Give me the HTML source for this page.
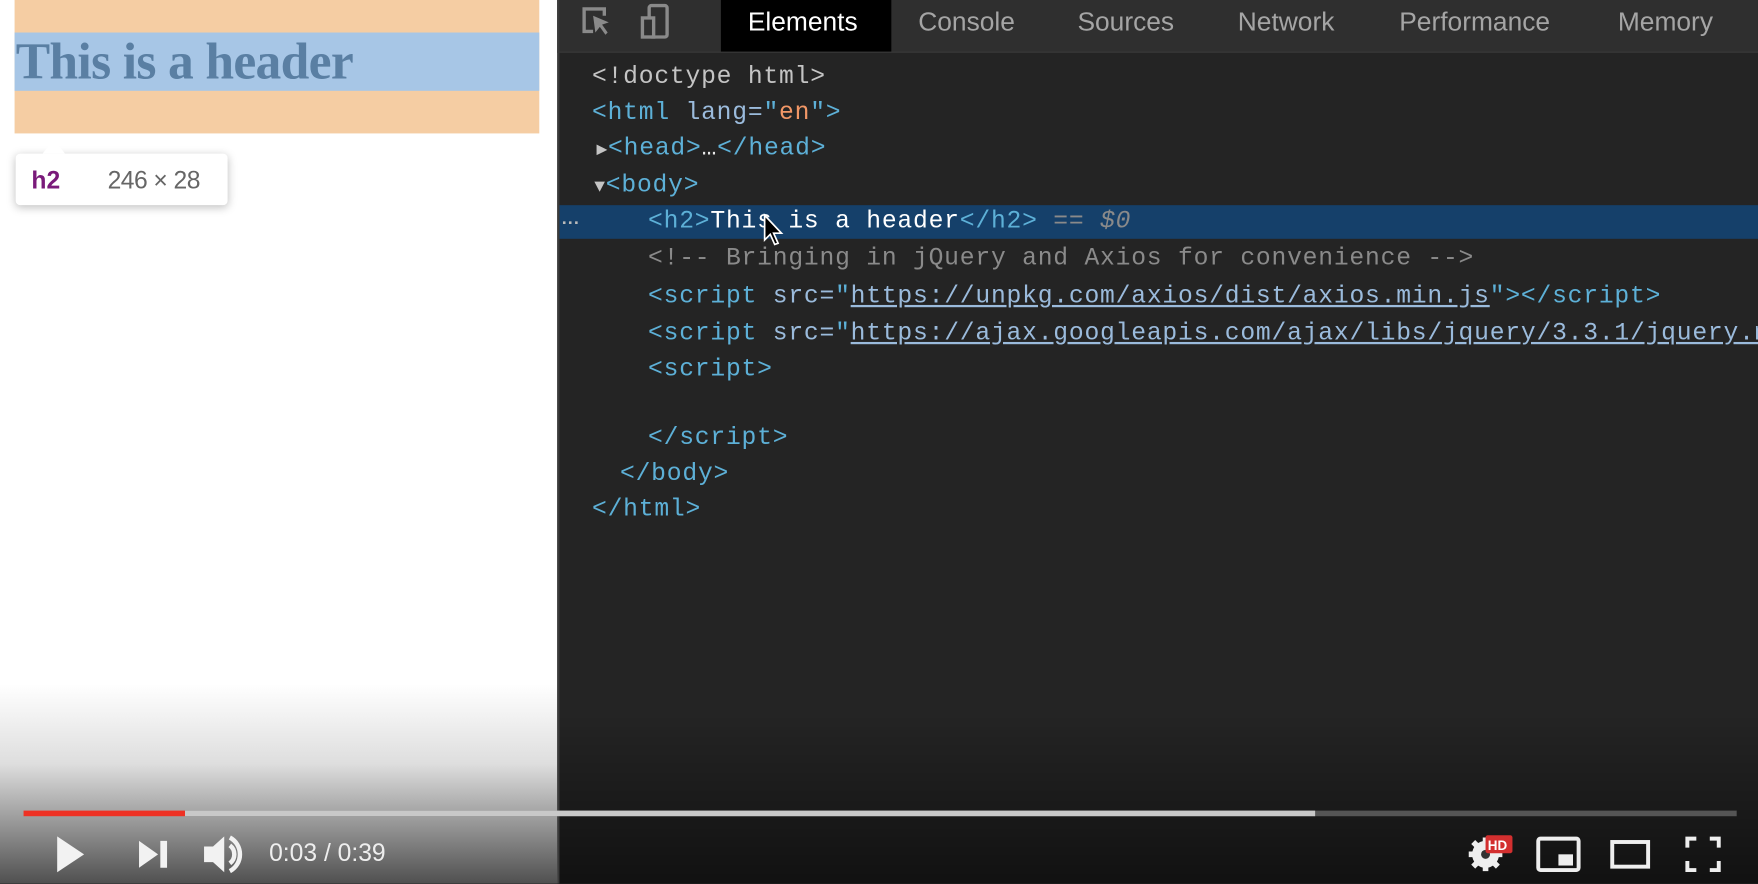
<!DOCTYPE html>
<html><head><style>
html,body{margin:0;padding:0;width:1758px;height:884px;overflow:hidden;background:#242424}
#w{position:absolute;left:0;top:0;width:1568px;height:788px;transform:scale(1.12117);transform-origin:0 0;overflow:hidden}
.a{position:absolute}
.mono{font-family:"Liberation Mono",monospace;font-size:22px;letter-spacing:0.7px;white-space:pre;line-height:24px}
.t{color:#5db0d7}.n{color:#9bbbdc}.v{color:#f29766}.g{color:#c4c4c4}.c{color:#8a8a8a}.w{color:#e8e8e8}
.u{text-decoration:underline;color:#9bbbdc}
.tab{position:absolute;top:0;height:46px;line-height:38px;font-family:"Liberation Sans",sans-serif;font-size:23.5px;color:#a5a5a5}
</style></head><body><div id="w">
<div class="a" style="left:0;top:0;width:497px;height:788px;background:#fff"></div>
<div class="a" style="left:13px;top:0;width:468px;height:119px;background:#f5cda3"></div>
<div class="a" style="left:13px;top:29px;width:468px;height:52px;background:#a7c6e6"></div>
<div class="a" style="left:14px;top:29px;font:bold 46px 'Liberation Serif',serif;color:#5a7fa3;line-height:52px;letter-spacing:-0.6px">This is a header</div>
<div class="a" style="left:14px;top:137px;width:189px;height:46px;background:#fff;border-radius:4px;box-shadow:0 2px 8px rgba(0,0,0,.25)"></div>
<div class="a" style="left:38px;top:124px;width:0;height:0;border-left:10px solid transparent;border-right:10px solid transparent;border-bottom:13px solid #fff"></div>
<div class="a" style="left:28px;top:148px;font:bold 22px 'Liberation Sans',sans-serif;color:#7a1a7a">h2</div>
<div class="a" style="left:96px;top:148px;font:22px 'Liberation Sans',sans-serif;color:#666;letter-spacing:-0.5px">246 × 28</div>

<div class="a" style="left:497px;top:0;width:1071px;height:46px;background:#2f2f2f;border-bottom:1px solid #3a3a3a"></div>
<div class="a" style="left:497px;top:0;width:2px;height:788px;background:#3b3b3b"></div>
<svg class="a" style="left:515px;top:2px" width="110" height="40"><path d="M14 26H6V6h18v6" fill="none" stroke="#8a8a8a" stroke-width="3"/><path d="M14 12l14 6-6 2 5 7-2 2-5-7-4 5z" fill="#8a8a8a"/><rect x="64" y="3" width="16" height="28" rx="2" fill="none" stroke="#8a8a8a" stroke-width="3"/><rect x="58" y="14" width="10" height="17" fill="#2f2f2f" stroke="#8a8a8a" stroke-width="3"/><rect x="111" y="4" width="1" height="30" fill="#444"/></svg>
<div class="a" style="left:643px;top:0;width:152px;height:46px;background:#000"></div>
<div class="tab" style="left:667px;color:#fff">Elements</div>
<div class="tab" style="left:819px">Console</div>
<div class="tab" style="left:961px">Sources</div>
<div class="tab" style="left:1104px">Network</div>
<div class="tab" style="left:1248px">Performance</div>
<div class="tab" style="left:1443px">Memory</div>

<div class="a" style="left:499px;top:183px;width:1069px;height:30px;background:#15406a"></div>
<div class="a" style="left:501px;top:187px;color:#bbb;font:bold 16px 'Liberation Sans';letter-spacing:1px">...</div>
<div class="a mono" style="left:528px;top:57px"><span class="g">&lt;!doctype html&gt;</span></div>
<div class="a mono" style="left:528px;top:89px"><span class="t">&lt;html </span><span class="n">lang=</span><span class="t">"</span><span class="v">en</span><span class="t">"&gt;</span></div>
<div class="a mono" style="left:532px;top:121px"><span class="g" style="font-size:16px">▶</span><span class="t">&lt;head&gt;</span><span class="w">…</span><span class="t">&lt;/head&gt;</span></div>
<div class="a mono" style="left:530px;top:154px"><span class="g" style="font-size:16px">▼</span><span class="t">&lt;body&gt;</span></div>
<div class="a mono" style="left:578px;top:186px"><span class="t">&lt;h2&gt;</span><span style="color:#fff">This is a header</span><span class="t">&lt;/h2&gt;</span><span class="c"> == <i>$0</i></span></div>
<div class="a mono" style="left:578px;top:219px"><span class="c">&lt;!-- Bringing in jQuery and Axios for convenience --&gt;</span></div>
<div class="a mono" style="left:578px;top:253px"><span class="t">&lt;script </span><span class="n">src=</span><span class="t">"</span><span class="u">https://unpkg.com/axios/dist/axios.min.js</span><span class="t">"&gt;&lt;/script&gt;</span></div>
<div class="a mono" style="left:578px;top:286px"><span class="t">&lt;script </span><span class="n">src=</span><span class="t">"</span><span class="u">https://ajax.googleapis.com/ajax/libs/jquery/3.3.1/jquery.min.js</span></div>
<div class="a mono" style="left:578px;top:318px"><span class="t">&lt;script&gt;</span></div>
<div class="a mono" style="left:578px;top:379px"><span class="t">&lt;/script&gt;</span></div>
<div class="a mono" style="left:553px;top:411px"><span class="t">&lt;/body&gt;</span></div>
<div class="a mono" style="left:528px;top:443px"><span class="t">&lt;/html&gt;</span></div>
<svg class="a" style="left:680px;top:190px" width="20" height="32"><path d="M2 2v22l5-5 4 9 3-1-4-9h7z" fill="#000" stroke="#fff" stroke-width="1.5"/></svg>

<div class="a" style="left:0;top:610px;width:497px;height:178px;background:linear-gradient(rgba(90,90,90,0),rgba(90,90,90,.2) 40%,rgba(80,80,80,1))"></div>
<div class="a" style="left:499px;top:640px;width:1069px;height:148px;background:linear-gradient(rgba(0,0,0,0),rgba(0,0,0,.5))"></div>
<div class="a" style="left:21px;top:723px;width:1528px;height:5px;background:#555"></div>
<div class="a" style="left:21px;top:723px;width:1152px;height:5px;background:#c8c8c8"></div>
<div class="a" style="left:21px;top:723px;width:144px;height:5px;background:#ee3124"></div>
<svg class="a" style="left:40px;top:740px" width="340" height="44"><path d="M11 6l24 16-24 16z" fill="#f2f2f2"/><path d="M84 10l17 12-17 12z M103 10h6v24h-6z" fill="#f2f2f2"/><path d="M142 15h8l10-9v32l-10-9h-8z" fill="#f2f2f2"/><path d="M165 14a10 10 0 0 1 0 16M165 7a17 17 0 0 1 0 30" fill="none" stroke="#f2f2f2" stroke-width="4"/></svg>
<div class="a" style="left:240px;top:748px;font:22px 'Liberation Sans',sans-serif;color:#eee">0:03 / 0:39</div>
<svg class="a" style="left:1305px;top:742px" width="240" height="40"><circle cx="20" cy="20" r="9" fill="none" stroke="#eee" stroke-width="6"/><path d="M20 5v30M5 20h30M9 9l22 22M31 9L9 31" stroke="#eee" stroke-width="5"/><circle cx="20" cy="20" r="4" fill="#333"/><rect x="20" y="3" width="24" height="16" rx="2" fill="#d32f2f"/><text x="22" y="16" font-family="Liberation Sans" font-weight="bold" font-size="12" fill="#fff">HD</text><rect x="67" y="6" width="36" height="28" rx="2" fill="none" stroke="#eee" stroke-width="3.5"/><rect x="85" y="20" width="13" height="10" fill="#eee"/><rect x="133" y="9" width="32" height="22" fill="none" stroke="#eee" stroke-width="3.5"/><path d="M200 14V6h8M220 6h8v8M228 26v8h-8M208 34h-8v-8" fill="none" stroke="#eee" stroke-width="3.5"/></svg>
</div></body></html>
